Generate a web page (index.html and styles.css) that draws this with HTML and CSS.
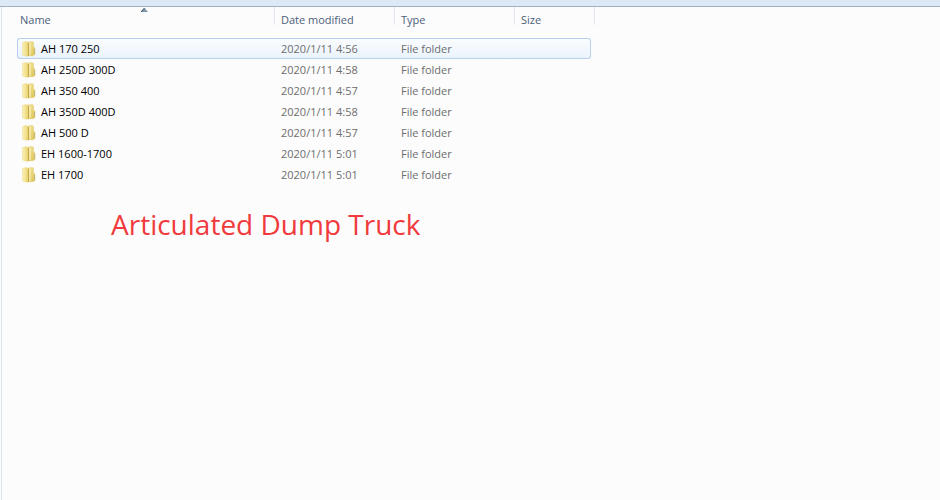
FILE: index.html
```html
<!DOCTYPE html>
<html lang="en">
<head>
<meta charset="utf-8">
<title>Articulated Dump Truck</title>
<link rel="stylesheet" href="styles.css">
</head>
<body>
<svg class="defs" aria-hidden="true">
  <defs>
    <linearGradient id="back" x1="0" x2="1" y1="0" y2="0">
      <stop offset="0" stop-color="#fbf3b8"/><stop offset="1" stop-color="#e8d06c"/>
    </linearGradient>
    <linearGradient id="front" x1="0" x2="1" y1="0" y2="1">
      <stop offset="0" stop-color="#f6eaa4"/><stop offset="1" stop-color="#dcc050"/>
    </linearGradient>
    <symbol id="folder" viewBox="0 0 16 16">
      <path d="M7 1 11.500 .5 12.500 1.500V6l1.500 1v6.500l-2 1.200H7z" fill="url(#front)" stroke="#e2ca6c" stroke-width=".5"/>
      <path d="M1.500 1.500 5 .5l2.500 1v13L6 15.500 1.500 14z" fill="url(#back)" stroke="#ead988" stroke-width=".5"/>
      <path d="M7.500 2v13" stroke="#c4a848" stroke-width="1"/>
      <path d="M9 2v12" stroke="#faf3c4" stroke-width="1"/>
      <path d="M13.500 8v5" stroke="#b4b88c" stroke-width=".8"/>
    </symbol>
  </defs>
</svg>
<div class="toolbar"></div>
<main class="pane">
  <table class="files">
    <colgroup><col class="c-name"><col class="c-mid"><col class="c-mid"><col class="c-size"><col class="c-end"></colgroup>
    <thead>
      <tr>
        <th aria-sort="ascending"><button type="button">Name</button><svg class="sort" viewBox="0 0 7 4" aria-hidden="true"><path d="M0 4 3.5 0 7 4z" fill="#7d97a8"/><path d="M0 4 3.5 0" stroke="#2f4a60" fill="none"/></svg></th>
        <th><button type="button">Date modified</button></th>
        <th><button type="button">Type</button></th>
        <th colspan="2"><button type="button">Size</button></th>
      </tr>
    </thead>
    <tbody>
      <tr class="selected"><td><span class="file"><svg><use href="#folder"/></svg>AH 170 250</span></td><td>2020/1/11 4:56</td><td>File folder</td><td></td></tr>
      <tr><td><span class="file"><svg><use href="#folder"/></svg>AH 250D 300D</span></td><td>2020/1/11 4:58</td><td>File folder</td><td></td></tr>
      <tr><td><span class="file"><svg><use href="#folder"/></svg>AH 350 400</span></td><td>2020/1/11 4:57</td><td>File folder</td><td></td></tr>
      <tr><td><span class="file"><svg><use href="#folder"/></svg>AH 350D 400D</span></td><td>2020/1/11 4:58</td><td>File folder</td><td></td></tr>
      <tr><td><span class="file"><svg><use href="#folder"/></svg>AH 500 D</span></td><td>2020/1/11 4:57</td><td>File folder</td><td></td></tr>
      <tr><td><span class="file"><svg><use href="#folder"/></svg>EH 1600-1700</span></td><td>2020/1/11 5:01</td><td>File folder</td><td></td></tr>
      <tr><td><span class="file"><svg><use href="#folder"/></svg>EH 1700</span></td><td>2020/1/11 5:01</td><td>File folder</td><td></td></tr>
    </tbody>
  </table>
  <h1>Articulated Dump Truck</h1>
</main>
</body>
</html>
```
FILE: styles.css
```css
* { box-sizing: border-box; }
body {
  margin: 0;
  min-height: 100vh;
  display: flex;
  flex-direction: column;
  background: #fcfcfc;
  font: 11px/16px "Segoe UI", "Open Sans", sans-serif;
  color: #6d6d6d;
}
.defs { position: absolute; width: 0; height: 0; }
.toolbar {
  height: 7px;
  background: linear-gradient(#dce8f6, #e0eaf7);
  border-bottom: 1px solid #a0afc3;
}
.pane {
  flex: 1;
  margin-left: 1px;
  padding-left: 15px;
  border-left: 1px solid #d6e8f5;
}
.files {
  table-layout: fixed;
  width: 578px;
  border-collapse: separate;
  border-spacing: 0;
}
.c-name { width: 258px; }
.c-mid { width: 120px; }
.c-size { width: 76px; }
.c-end { width: 4px; }
th, td { padding: 0; text-align: left; font-weight: 400; white-space: nowrap; }
th {
  position: relative;
  height: 31px;
  padding-bottom: 6px;
  background: linear-gradient(#dfe6f0, #e4eaf2) right top / 1px 18px no-repeat;
}
th button {
  display: block;
  width: 100%;
  padding: 0 0 0 6px;
  border: 0;
  background: none;
  font: inherit;
  color: #4c607a;
  text-align: left;
}
th:first-child button { padding-left: 3px; }
.sort { position: absolute; top: 1px; left: 50%; width: 7px; height: 4px; margin-left: -5px; }
td { height: 21px; padding-left: 6px; }
td:first-child { padding-left: 4px; color: #000; }
.file { display: flex; align-items: center; gap: 4px; }
.file svg { width: 16px; height: 16px; }
.selected td {
  border: solid #b8d0ee;
  border-width: 1px 0;
  background: linear-gradient(#fafcfe, #eaf3fc);
}
.selected td:first-child { padding-left: 3px; border-left-width: 1px; border-radius: 3px 0 0 3px; }
.selected td:last-child { border-right-width: 1px; border-radius: 0 3px 3px 0; }
h1 {
  margin: 19px 0 0 94px;
  font-size: 28px;
  line-height: 40px;
  font-weight: 400;
  color: #f03a3c;
}
```
